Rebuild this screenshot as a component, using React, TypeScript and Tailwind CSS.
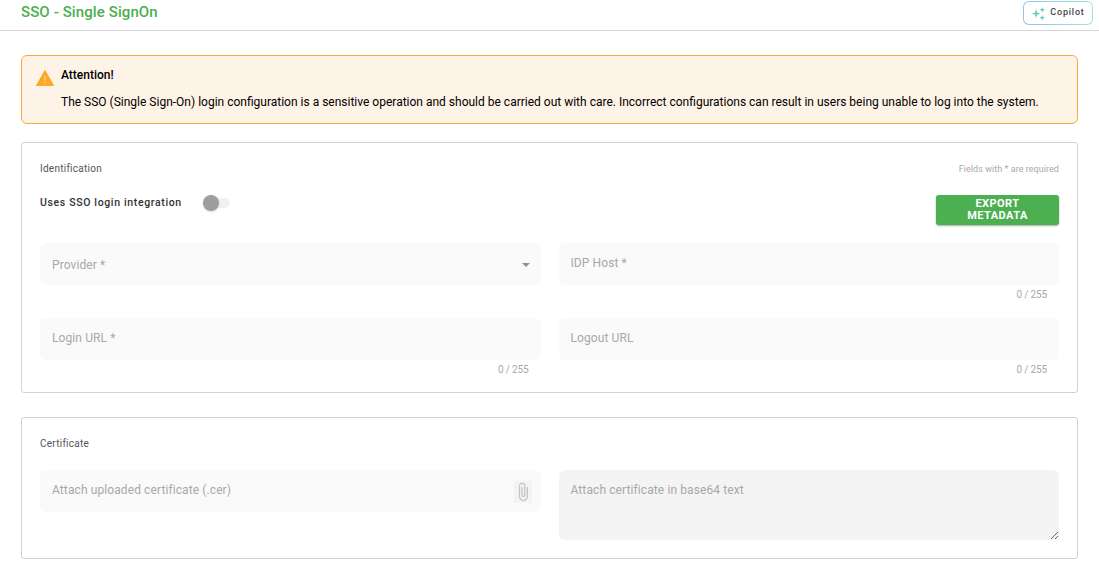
const font = { fontFamily: "Roboto, sans-serif" };

function Field({ label, counter, arrow }: { label: string; counter?: boolean; arrow?: boolean }) {
	return (
		<div>
			<div className="flex h-[42px] items-center justify-between rounded-md bg-[#fafafa] pl-3 pr-[11px]">
				<span className={`text-[12px] tracking-[0.1px] text-[#a8a8a8] ${arrow ? "mt-[1px]" : "-mt-0.5"}`}>{label}</span>
				{arrow && <span className="mt-0.5 h-0 w-0 border-x-[4px] border-t-[4px] border-x-transparent border-t-[#8f8f8f]" />}
			</div>
			<div className="h-[33px] pt-[2px] pr-3 text-right text-[10px] leading-[16px] text-[#a8a8a8]">
				{counter && <span className="tracking-[-0.15px]">0 / 255</span>}
			</div>
		</div>
	);
}

export default function App() {
	return (
		<div className="h-[567px] w-[1099px] overflow-hidden bg-white" style={font}>
			<header className="flex h-[31px] items-start justify-between border-b border-[#d6d6d6] pl-[21px] pr-[6px]">
				<h1 className="pt-[2px] text-[15px] leading-[20px] font-medium tracking-[0.1px] text-[#4caf50]">SSO - Single SignOn</h1>
				<div className="mt-px h-[24px] w-[70px] rounded-md bg-gradient-to-r from-[#8cc6ea] to-[#9fe3dc] p-px">
					<button className="flex h-full w-full items-center justify-center gap-[4px] rounded-[5px] bg-white text-[9px] font-medium tracking-[0.8px] text-[#444]">
						<svg viewBox="0 0 16 16" className="h-[15px] w-[15px]">
							<path d="M5.5 3.5l1.2 3.3 3.3 1.2-3.3 1.2-1.2 3.3-1.2-3.3L1 8l3.3-1.2z" fill="#66d6a8" />
							<path d="M12 1l.8 2.2 2.2.8-2.2.8-.8 2.2-.8-2.2L9 4l2.2-.8z" fill="#62c6cf" />
							<path d="M12 9.5l.8 2.2 2.2.8-2.2.8-.8 2.2-.8-2.2-2.2-.8 2.2-.8z" fill="#62c6cf" />
						</svg>
						Copilot
					</button>
				</div>
			</header>

			<main className="px-[21px] pt-[24px]">
				<div className="flex h-[69px] w-[1057px] rounded-md border border-[#f8a93f] bg-[#fef3e7] pl-[14px] pt-[11px]">
					<svg viewBox="0 0 18 16" className="mt-[3px] h-[16px] w-[18px] shrink-0">
						<path d="M9 0.5L17.5 15.5H0.5z" fill="#ffa726" stroke="#ffa726" strokeLinejoin="round" />
						<path d="M8.3 6h1.4v4.5H8.3zM8.3 11.5h1.4V13H8.3z" fill="#ffd699" />
					</svg>
					<div className="ml-[7px] text-black">
						<div className="text-[12px] leading-[16px] font-medium">Attention!</div>
						<p className="mt-[11px] text-[12px] leading-[16px]">
							The SSO (Single Sign-On) login configuration is a sensitive operation and should be carried out with care. Incorrect configurations can result in users being unable to log into the system.
						</p>
					</div>
				</div>

				<section className="mt-[18px] h-[251px] w-[1057px] rounded-[3px] border border-[#d2d2d2] px-[18px] pt-[19px]">
					<div className="flex items-center justify-between">
						<span className="text-[10px] leading-[14px] tracking-[0.25px] text-[#555]">Identification</span>
						<span className="text-[9px] leading-[14px] tracking-[0.05px] text-[#a8a8a8]">Fields with * are required</span>
					</div>
					<div className="mt-[19px] flex h-[31px] items-start justify-between">
						<div className="mt-px flex items-center">
							<span className="text-[10.5px] leading-[14px] font-medium tracking-[0.65px] text-[#333]">Uses SSO login integration</span>
							<span className="relative ml-[21px] h-[10px] w-[27px] rounded-full bg-[#f1f1f1]">
								<span className="absolute top-[-3px] left-0 h-[16px] w-[16px] rounded-full bg-[#9e9e9e] shadow-sm" />
							</span>
						</div>
						<button className="h-[30px] w-[123px] rounded-[3px] bg-[#4caf50] text-[11px] leading-[12px] font-bold tracking-[0.45px] text-white shadow-[0_1px_2px_rgba(0,0,0,0.35)]">
							EXPORT
							<br />
							METADATA
						</button>
					</div>
					<div className="mt-[17px] grid grid-cols-2 gap-x-[18px]">
						<Field label="Provider *" arrow />
						<Field label="IDP Host *" counter />
						<Field label="Login URL *" counter />
						<Field label="Logout URL" counter />
					</div>
				</section>

				<section className="mt-[24px] h-[142px] w-[1057px] rounded-[3px] border border-[#d2d2d2] px-[18px] pt-[19px]">
					<div className="text-[10px] leading-[14px] tracking-[0.25px] text-[#555]">Certificate</div>
					<div className="mt-[19px] grid grid-cols-2 gap-x-[18px]">
						<div className="flex h-[42px] items-center justify-between rounded-md bg-[#fafafa] pl-3 pr-[9px]">
							<span className="-mt-0.5 text-[12px] tracking-[0.1px] text-[#a8a8a8]">Attach uploaded certificate (.cer)</span>
							<span className="mt-px flex h-[22px] w-[18px] items-center justify-center bg-[#f3f3f3]">
								<svg viewBox="0 0 24 24" className="h-[20px] w-[20px] shrink-0" fill="#c4c4c4">
									<path d="M16.5 6v11.5c0 2.21-1.79 4-4 4s-4-1.79-4-4V5c0-1.38 1.12-2.5 2.5-2.5s2.5 1.12 2.5 2.5v10.5c0 .55-.45 1-1 1s-1-.45-1-1V6H10v9.5c0 1.38 1.12 2.5 2.5 2.5s2.5-1.12 2.5-2.5V5c0-2.21-1.79-4-4-4S7 2.79 7 5v12.5c0 3.04 2.46 5.5 5.5 5.5s5.5-2.46 5.5-5.5V6h-1.5z" />
								</svg>
							</span>
						</div>
						<textarea
							disabled
							placeholder="Attach certificate in base64 text"
							className="h-[70px] resize-y rounded-md bg-[#f4f4f4] px-3 py-[12px] text-[12px] leading-[16px] tracking-[0.1px] outline-none placeholder:text-[#a8a8a8]"
						/>
					</div>
				</section>
			</main>
		</div>
	);
}
